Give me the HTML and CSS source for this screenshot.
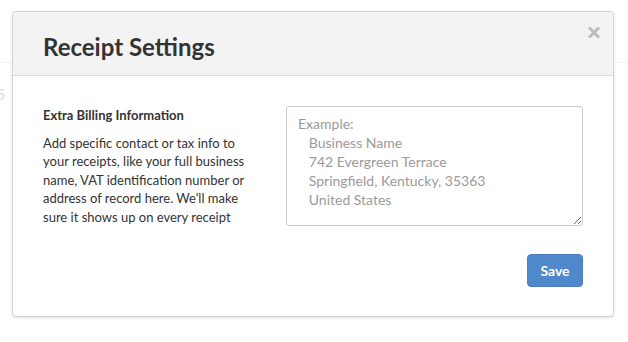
FILE: index.html
```html
<!DOCTYPE html>
<html lang="en">
<head>
  <meta charset="UTF-8" />
  <title>Receipt Settings</title>
  <link rel="stylesheet" href="styles.css">
</head>
<body>

  <div class="page">
    <div class="page-bar"></div>
    <div class="page-num">5</div>
  </div>

  <div class="modal">
    <div class="modal-header">
      <h1>Receipt Settings</h1>
      <button class="close" aria-label="Close">
        <svg width="12" height="11" viewBox="0 0 12 11">
          <path d="M2 1.5 L10 9.5 M10 1.5 L2 9.5" stroke="#bdbdbd" stroke-width="3" stroke-linecap="square" />
        </svg>
      </button>
    </div>

    <div class="modal-body">
      <div class="row">
        <div class="info">
          <h3>Extra Billing Information</h3>
          <p>Add specific contact or tax info to your receipts, like your full business name, VAT identification number or address of record here. We'll make sure it shows up on every receipt</p>
        </div>
        <textarea class="billing" placeholder="Example:&#10;   Business Name&#10;   742 Evergreen Terrace&#10;   Springfield, Kentucky, 35363&#10;   United States"></textarea>
      </div>
      <div class="actions">
        <button class="btn-save">Save</button>
      </div>
    </div>
  </div>

</body>
</html>
```

FILE: styles.css
```css
body {
  font-family: Lato, "Open Sans", sans-serif;
  background: #fff;
  margin: 0;
  padding: 0;
  color: #333;
}

.page {
  height: 342px;
  overflow: hidden;
}

.page-bar {
  height: 62px;
  border-bottom: 1px solid #f2f2f2;
}

.page-num {
  margin: 21px 0 0 -4px;
  font-size: 16px;
  color: #dcdcdc;
}

.modal {
  position: absolute;
  left: 12px;
  top: 11px;
  width: 600px;
  background: #fff;
  border: 1px solid #d3d3d3;
  border-radius: 4px;
  box-shadow: 0 1px 3px rgba(0, 0, 0, 0.12);
}

.modal-header {
  display: flex;
  justify-content: space-between;
  align-items: flex-start;
  height: 63px;
  padding: 0 13px 0 30px;
  background: #f3f3f3;
  border-bottom: 1px solid #dadada;
  border-radius: 4px 4px 0 0;
}

.modal-header h1 {
  margin: 19px 0 0;
  font-size: 24px;
  line-height: 32px;
  font-weight: bold;
  color: #333;
}

.close {
  margin-top: 15px;
  padding: 0;
  border: none;
  background: none;
  line-height: 0;
  cursor: pointer;
}

.modal-body {
  padding: 30px 30px 29px;
}

.row {
  display: flex;
  justify-content: space-between;
}

.info {
  width: 212px;
}

.info h3 {
  margin: 0;
  font-size: 13px;
  line-height: 18px;
  font-weight: bold;
}

.info p {
  margin: 10px 0 0;
  font-size: 13px;
  line-height: 18.4px;
}

.billing {
  width: 297px;
  height: 120px;
  box-sizing: border-box;
  padding: 7px 11px;
  border: 1px solid #ccc;
  border-radius: 3px;
  font-family: Lato, "Open Sans", sans-serif;
  font-size: 14px;
  line-height: 19px;
  color: #333;
  resize: vertical;
}

.billing::placeholder {
  color: #9a9a9a;
}

.actions {
  display: flex;
  justify-content: flex-end;
  margin-top: 28px;
}

.btn-save {
  width: 56px;
  height: 33px;
  background: #5088cc;
  border: 1px solid #4a7fc0;
  border-radius: 4px;
  color: #fff;
  font-family: Lato, "Open Sans", sans-serif;
  font-size: 14px;
  font-weight: bold;
  cursor: pointer;
}
```
